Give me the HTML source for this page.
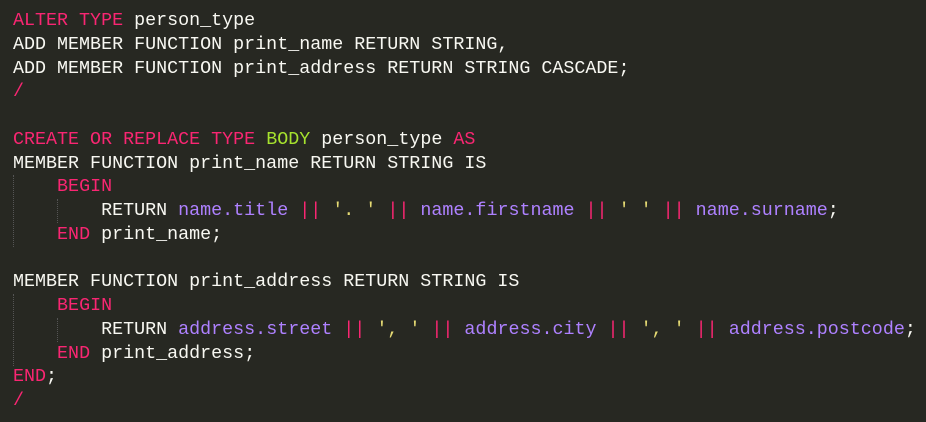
<!DOCTYPE html>
<html><head><meta charset="utf-8"><style>
html,body{margin:0;padding:0;background:#272822;width:926px;height:422px;overflow:hidden}
pre{margin:0;position:absolute;left:13px;top:9px;font-family:"Liberation Mono",monospace;font-size:18.35px;line-height:23.75px;color:#F8F8F2;white-space:pre}
.k{color:#F92672}.g{color:#A6E22E}.p{color:#AE81FF}.s{color:#E6DB74}
.guide{position:absolute;width:0;border-left:1px dotted #555}
</style></head><body>
<div class="guide" style="left:13px;top:175px;height:72px"></div>
<div class="guide" style="left:57px;top:199px;height:24px"></div>
<div class="guide" style="left:13px;top:294px;height:72px"></div>
<div class="guide" style="left:57px;top:318px;height:24px"></div>
<pre><span class="k">ALTER TYPE</span> person_type
ADD MEMBER FUNCTION print_name RETURN STRING,
ADD MEMBER FUNCTION print_address RETURN STRING CASCADE;
<span class="k">/</span>

<span class="k">CREATE OR REPLACE TYPE</span> <span class="g">BODY</span> person_type <span class="k">AS</span>
MEMBER FUNCTION print_name RETURN STRING IS
    <span class="k">BEGIN</span>
        RETURN <span class="p">name.title</span> <span class="k">||</span> <span class="s">'. '</span> <span class="k">||</span> <span class="p">name.firstname</span> <span class="k">||</span> <span class="s">' '</span> <span class="k">||</span> <span class="p">name.surname</span>;
    <span class="k">END</span> print_name;

MEMBER FUNCTION print_address RETURN STRING IS
    <span class="k">BEGIN</span>
        RETURN <span class="p">address.street</span> <span class="k">||</span> <span class="s">', '</span> <span class="k">||</span> <span class="p">address.city</span> <span class="k">||</span> <span class="s">', '</span> <span class="k">||</span> <span class="p">address.postcode</span>;
    <span class="k">END</span> print_address;
<span class="k">END</span>;
<span class="k">/</span></pre>
</body></html>
